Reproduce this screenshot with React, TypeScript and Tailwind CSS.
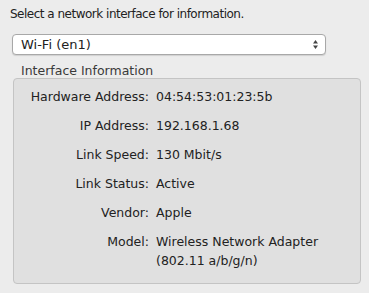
import React from "react";

const rows: [string, string[]][] = [
  ["Hardware Address:", ["04:54:53:01:23:5b"]],
  ["IP Address:", ["192.168.1.68"]],
  ["Link Speed:", ["130 Mbit/s"]],
  ["Link Status:", ["Active"]],
  ["Vendor:", ["Apple"]],
  ["Model:", ["Wireless Network Adapter", "(802.11 a/b/g/n)"]],
];

const App: React.FC = () => {
  return (
    <div className="w-[369px] h-[293px] bg-[#ececec] text-[#222] text-[12.5px] font-['DejaVu_Sans',sans-serif] overflow-hidden">
      <p className="pl-[10px] pt-[6px] leading-[16px] text-[12px] tracking-[-0.5px]">Select a network interface for information.</p>

      <div className="ml-[12px] mt-[12px] w-[314px] h-[21px] bg-white border border-[#a8a8a8] rounded-[4px] shadow-[0_1px_1px_rgba(0,0,0,0.12)] flex items-center justify-between pl-[8px] pr-[6px]">
        <span className="text-[13px]">Wi-Fi (en1)</span>
        <svg width="7" height="11" viewBox="0 0 7 11">
          <path d="M3.5 1 L6 4.5 L1 4.5 Z" fill="#444" />
          <path d="M3.5 10 L6 6.5 L1 6.5 Z" fill="#444" />
        </svg>
      </div>

      <p className="pl-[21px] mt-[9px] leading-[14px] text-[#3a3a3a]">Interface Information</p>

      <div className="ml-[13px] w-[348px] h-[206px] bg-[#e0e0e0] border border-[#c4c4c4] rounded-[4px] pt-[10px]">
        <div className="flex flex-col gap-[13px]">
          {rows.map(([label, values]) => (
            <div key={label} className="flex leading-[16px]">
              <span className="w-[135px] text-right">{label}</span>
              <div className="pl-[7px] flex flex-col gap-[3px]">
                {values.map((v) => (
                  <span key={v}>{v}</span>
                ))}
              </div>
            </div>
          ))}
        </div>
      </div>
    </div>
  );
};

export default App;
